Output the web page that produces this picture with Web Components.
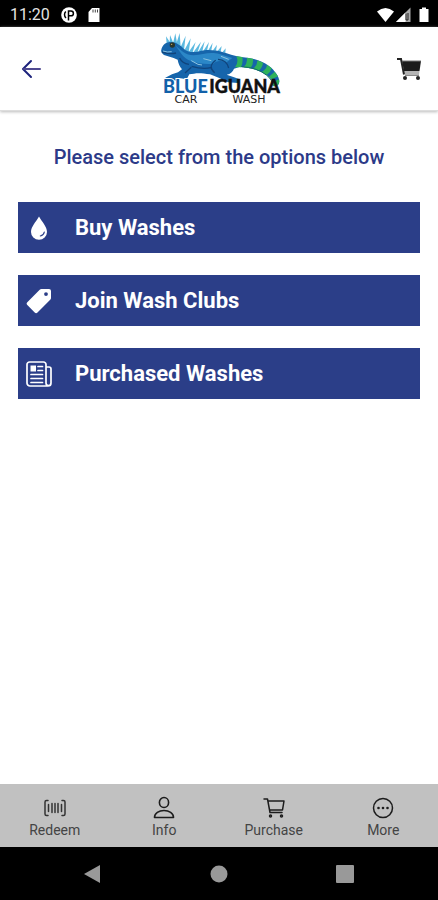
<!DOCTYPE html>
<html lang="en">
<head>
<meta charset="utf-8">
<meta name="viewport" content="width=device-width, initial-scale=1">
<title>Blue Iguana Car Wash</title>
<style>
body { margin: 0; background: #fff; font-family: Roboto, "Liberation Sans", sans-serif; }
</style>
</head>
<body>
<wash-app></wash-app>
<script>
const icons = {
  back: '<svg width="20" height="20" viewBox="0 0 20 20" fill="none" stroke="#1d237c" stroke-width="2" stroke-linecap="round" stroke-linejoin="round"><path d="M10 2 2 10l8 8"/><path d="M3 10h16" stroke="#4f4990"/></svg>',
  cart: '<svg width="26" height="24" viewBox="0 0 26 24"><path d="M6 4h19l-1.500 10H8z" fill="#1b1b1b"/><path d="M8 14h15.500l-.5 4H9z" fill="#b4b4b4"/><path d="M1 2h4l3 15.500" fill="none" stroke="#222" stroke-width="2"/><path d="M6 4h19" stroke="#777"/><path d="M9 18.500h14" stroke="#888"/><circle cx="9" cy="21" r="2" fill="#222"/><circle cx="22" cy="21" r="2" fill="#222"/></svg>',
  drop: '<svg width="26" height="26" viewBox="0 0 26 26"><path d="M13 1.500C10 7 5 11.500 5 17a8 7.700 0 0 0 16 0C21 11.500 16 7 13 1.500z" fill="#fff"/><path d="M18.300 17a5 5 0 0 1-4 4" fill="none" stroke="#2b3e88" stroke-width="1.200" stroke-linecap="round"/></svg>',
  tag: '<svg width="26" height="26" viewBox="0 0 26 26"><path fill="#fff" fill-rule="evenodd" d="M15.500 1H23a2 2 0 0 1 2 2v7a2.500 2.500 0 0 1-.8 1.800L11.500 24.500a2 2 0 0 1-2.800 0L1.300 17a2 2 0 0 1 0-2.800L13.700 1.700A2.500 2.500 0 0 1 15.500 1zM20 4.200a1.900 1.900 0 1 0 0 3.800 1.900 1.900 0 0 0 0-3.800z"/></svg>',
  news: '<svg width="26" height="26" viewBox="0 0 26 26" fill="none" stroke="#fff" stroke-width="1.700" stroke-linecap="round"><path d="M22 25H4a3 3 0 0 1-3-3V3.500A2.500 2.500 0 0 1 3.500 1h14A2.500 2.500 0 0 1 20 3.500V22a2.500 2.500 0 0 0 5 0V8a2 2 0 0 0-2-2h-3M22 25a3 3 0 0 0 3-3"/><path d="M12 5.500h4.500M12 9.500h4.500M5 13.500h11.500M5 17.500h11.500M5 21.500h11.500"/><path d="M4.500 4.500h5.500v6H4.500z" fill="#fff" stroke="none"/></svg>',
  redeem: '<svg width="24" height="24" viewBox="0 0 24 24" fill="none" stroke="#333" stroke-width="1.500" stroke-linecap="round"><path d="M5 4.500H3.500a1.500 1.500 0 0 0-1.500 1.500v12a1.500 1.500 0 0 0 1.500 1.500H5M19 4.500h1.500A1.500 1.500 0 0 1 22 6v12a1.500 1.500 0 0 1-1.500 1.500H19M5.500 8.500v7M9 7.500v9M12 7.500v9M15 7.500v9M18.500 8.500v7"/></svg>',
  info: '<svg width="24" height="24" viewBox="0 0 24 24" fill="none" stroke="#1c1c1c" stroke-width="1.600" stroke-linejoin="round"><ellipse cx="12" cy="6.500" rx="4.600" ry="5"/><path d="M2.500 21.500c0-4.500 4.500-7 9.500-7s9.500 2.500 9.500 7z"/></svg>',
  purchase: '<svg width="24" height="24" viewBox="0 0 24 24" fill="none" stroke="#1c1c1c" stroke-width="1.500" stroke-linecap="round" stroke-linejoin="round"><path d="M2 3h3.500L8 16.500h12M6 5h16l-1.500 9H7.700"/><circle cx="8.500" cy="20" r="1"/><circle cx="19.500" cy="20" r="1"/></svg>',
  more: '<svg width="24" height="24" viewBox="0 0 24 24" fill="none" stroke="#1c1c1c" stroke-width="1.500"><circle cx="12" cy="12" r="9.500"/><g fill="#1c1c1c" stroke="none"><circle cx="7.500" cy="12" r="1.300"/><circle cx="12" cy="12" r="1.300"/><circle cx="16.500" cy="12" r="1.300"/></g></svg>'
};

class BaseElement extends HTMLElement {
  connectedCallback() {
    if (!this.shadowRoot) this.attachShadow({ mode: 'open' }).innerHTML = this.view();
  }
}

customElements.define('ui-icon', class extends BaseElement {
  view() {
    return `<style>:host{display:inline-flex;flex:none} svg{display:block}</style>${icons[this.getAttribute('name')]}`;
  }
});

customElements.define('status-bar', class extends BaseElement {
  view() {
    return `<style>
      :host{display:flex;align-items:center;justify-content:space-between;height:27px;box-sizing:border-box;padding:2px 9px 0 10px;background:#000;color:#e4e4e4;font-size:16px;line-height:20px}
      div{display:flex;align-items:center}
      .left{gap:11px} .right{gap:2px}
      svg{display:block}
      .battery{margin-left:6px}
    </style>
    <div class="left"><span>11:20</span>
      <svg width="16" height="16" viewBox="0 0 16 16"><circle cx="8" cy="8" r="7.800" fill="#fff"/><path d="M7.500 13.500V4H10a2.200 2.200 0 0 1 0 4.800H8M4.800 4.500A4.500 4.500 0 0 0 5 11" fill="none" stroke="#000" stroke-width="1.500"/></svg>
      <svg width="12" height="16" viewBox="0 0 12 16"><path d="M4 1h7.500v14H.5V5z" fill="#fff"/><path d="M5 2.500v3M7.300 2.500v3M9.500 2.500v3" stroke="#444"/></svg>
    </div>
    <div class="right">
      <svg width="17" height="16" viewBox="0 0 17 16"><path d="M0 4.500Q8.500-2.500 17 4.500L8.500 15z" fill="#fff"/></svg>
      <svg width="15" height="16" viewBox="0 0 15 16"><path d="M0 15 14.500.5V15z" fill="#aaa"/><path d="M0 15 9.500 5.500V15z" fill="#fff"/><path d="M10 6.500V13h2V6" fill="none" stroke="#222"/></svg>
      <svg class="battery" width="10" height="16" viewBox="0 0 10 16"><path d="M3 .5h4V2h2.500v13h-9V2H3z" fill="#fff"/></svg>
    </div>`;
  }
});

customElements.define('iguana-logo', class extends BaseElement {
  view() {
    return `<style>:host{display:block} svg{display:block}
      .name{font:900 18px Lato,"Liberation Sans",sans-serif}
      .sub{font:11px "DejaVu Sans",sans-serif;fill:#222}
    </style>
    <svg width="135" height="80" viewBox="0 0 135 80" role="img" aria-label="Blue Iguana Car Wash">
      <g transform="scale(.33333)">
        <path fill="#5cb9e0" d="M38 44 36 22l12 18zM47 42 48 18l9 22zM57 43 64 13l6 34zM66 47 77 12l3 42zM79 56 95 20l-5 44zM91 64l19-36-6 42zM104 69l21-30-9 31zM118 70l23-32-10 31zM133 68l19-31-7 30zM148 66l17-27-6 26zM162 65l14-24-4 23zM176 65l13-18-3 18zM190 67l13-16-3 18zM205 70l10-12-1 14z"/>
        <path fill="#1665ab" d="M22 62C24 52 32 41 46 39C62 37 77 46 89 59C100 69 114 71 130 68C155 61 180 62 205 69C222 74 240 80 262 84C295 87 322 94 344 110C364 125 377 145 376 158C375 169 367 174 356 171C361 159 351 147 336 137C313 121 287 116 256 114L240 119C237 128 230 135 218 137L238 144L255 150L252 162L222 160L194 146L168 136C148 133 132 131 120 134L106 136L98 151L80 148L66 155L50 152L34 154L34 146L54 136L72 130L84 121C77 113 73 103 71 92L59 87L30 78C24 74 20 69 22 62Z"/>
        <path fill="#2b87c7" d="M64 49C82 65 94 79 119 79C148 78 164 67 196 75L235 87L218 100C203 94 186 94 178 104C156 108 131 102 110 96C87 88 78 68 64 49Z"/>
        <path fill="none" stroke="#10447c" stroke-width="4" d="M24 69q25 8 42 3M77 87q7 16 28 19M113 112q36 11 60 3M185 94c-18 13-17 26-3 37M192 91q27 2 32 26M112 115l-19 17"/>
        <path fill="none" stroke="#8ec5e2" stroke-width="3" d="M112 95l20 11 12 2M148 89l24 6M201 82l23 9M27 66q13 5 26 2"/>
        <circle cx="55" cy="48" r="8" fill="#29352a"/><circle cx="53" cy="46" r="2" fill="#d9b467"/>
        <path fill="#2fb35a" d="M247 82l18 2q3 15-4 31h-18q12-15 4-33zM278 86l19 3q2 18-8 29l-20-3q13-13 9-29zM310 94l17 7q-1 14-13 24l-17-6q14-11 13-25zM339 107l14 11q-3 12-15 20l-14-10q14-8 15-21zM362 128l10 14-19 9-8-8zM375 151q3 16-9 21l-10-2 3-12z"/>
        <path fill="none" stroke="#126d63" stroke-width="3" d="M262 113q46 2 75 25 20 16 19 31"/>
      </g>
      <text class="name" x="9" y="64" fill="#1261a9" stroke="#fff" stroke-width="2" paint-order="stroke">BLUE</text>
      <text class="name" x="126" y="64" text-anchor="end" fill="#111" stroke="#111" stroke-width=".4">IGUANA</text>
      <text class="sub" x="32" y="74" text-anchor="middle">CAR</text>
      <text class="sub" x="95" y="74" text-anchor="middle">WASH</text>
    </svg>`;
  }
});

customElements.define('app-header', class extends BaseElement {
  view() {
    return `<style>
      :host{display:grid;grid-template-columns:1fr auto 1fr;align-items:center;height:84px;box-sizing:border-box;padding:0 16px 0 21px;background:#fff;border-bottom:1px solid #ddd;box-shadow:0 1px 3px #bbb}
      button{display:flex;padding:0;border:0;background:none}
      button:last-child{justify-self:end}
    </style>
    <button aria-label="Back"><ui-icon name="back"></ui-icon></button>
    <iguana-logo></iguana-logo>
    <button aria-label="Cart"><ui-icon name="cart"></ui-icon></button>`;
  }
});

customElements.define('option-button', class extends BaseElement {
  view() {
    return `<style>
      :host{display:block}
      button{display:flex;align-items:center;gap:23px;width:100%;height:51px;padding:0 8px;border:0;background:#2b3e88;color:#fff;font:bold 22px/28px Roboto,"Liberation Sans",sans-serif;text-align:left}
    </style>
    <button><ui-icon name="${this.getAttribute('icon')}"></ui-icon><span><slot></slot></span></button>`;
  }
});

customElements.define('tab-item', class extends BaseElement {
  view() {
    return `<style>
      :host{display:block;flex:1 1 0;min-width:0}
      a{display:flex;flex-direction:column;align-items:center;gap:2px;padding-top:12px;color:#444;text-decoration:none;font-size:14px;line-height:16px}
    </style>
    <a href="#${this.getAttribute('icon')}"><ui-icon name="${this.getAttribute('icon')}"></ui-icon><span><slot></slot></span></a>`;
  }
});

customElements.define('tab-bar', class extends BaseElement {
  view() {
    return `<style>:host{display:block} nav{display:flex;height:63px;background:#c1c1c1}</style>
    <nav><slot></slot></nav>`;
  }
});

customElements.define('system-nav', class extends BaseElement {
  view() {
    return `<style>
      :host{display:flex;justify-content:center;align-items:center;gap:108px;height:53px;background:#000}
      button{display:flex;padding:0;border:0;background:none}
    </style>
    <button aria-label="Back"><svg width="18" height="20" viewBox="0 0 18 20"><path d="M0 10 16 1v18z" fill="#999"/></svg></button>
    <button aria-label="Home"><svg width="18" height="20" viewBox="0 0 18 20"><circle cx="9" cy="10" r="8.500" fill="#999"/></svg></button>
    <button aria-label="Overview"><svg width="18" height="20" viewBox="0 0 18 20"><rect y="1" width="18" height="18" rx="1" fill="#999"/></svg></button>`;
  }
});

customElements.define('wash-app', class extends BaseElement {
  view() {
    return `<style>
      :host{display:flex;flex-direction:column;min-height:100vh}
      main{flex:1;padding:32px 18px}
      h1{margin:0 0 31px;color:#2c3a88;font-size:20px;line-height:28px;font-weight:500;text-align:center}
      .options{display:flex;flex-direction:column;gap:22px}
    </style>
    <status-bar></status-bar>
    <app-header></app-header>
    <main>
      <h1>Please select from the options below</h1>
      <div class="options">
        <option-button icon="drop">Buy Washes</option-button>
        <option-button icon="tag">Join Wash Clubs</option-button>
        <option-button icon="news">Purchased Washes</option-button>
      </div>
    </main>
    <tab-bar>
      <tab-item icon="redeem">Redeem</tab-item>
      <tab-item icon="info">Info</tab-item>
      <tab-item icon="purchase">Purchase</tab-item>
      <tab-item icon="more">More</tab-item>
    </tab-bar>
    <system-nav></system-nav>`;
  }
});
</script>
</body>
</html>
